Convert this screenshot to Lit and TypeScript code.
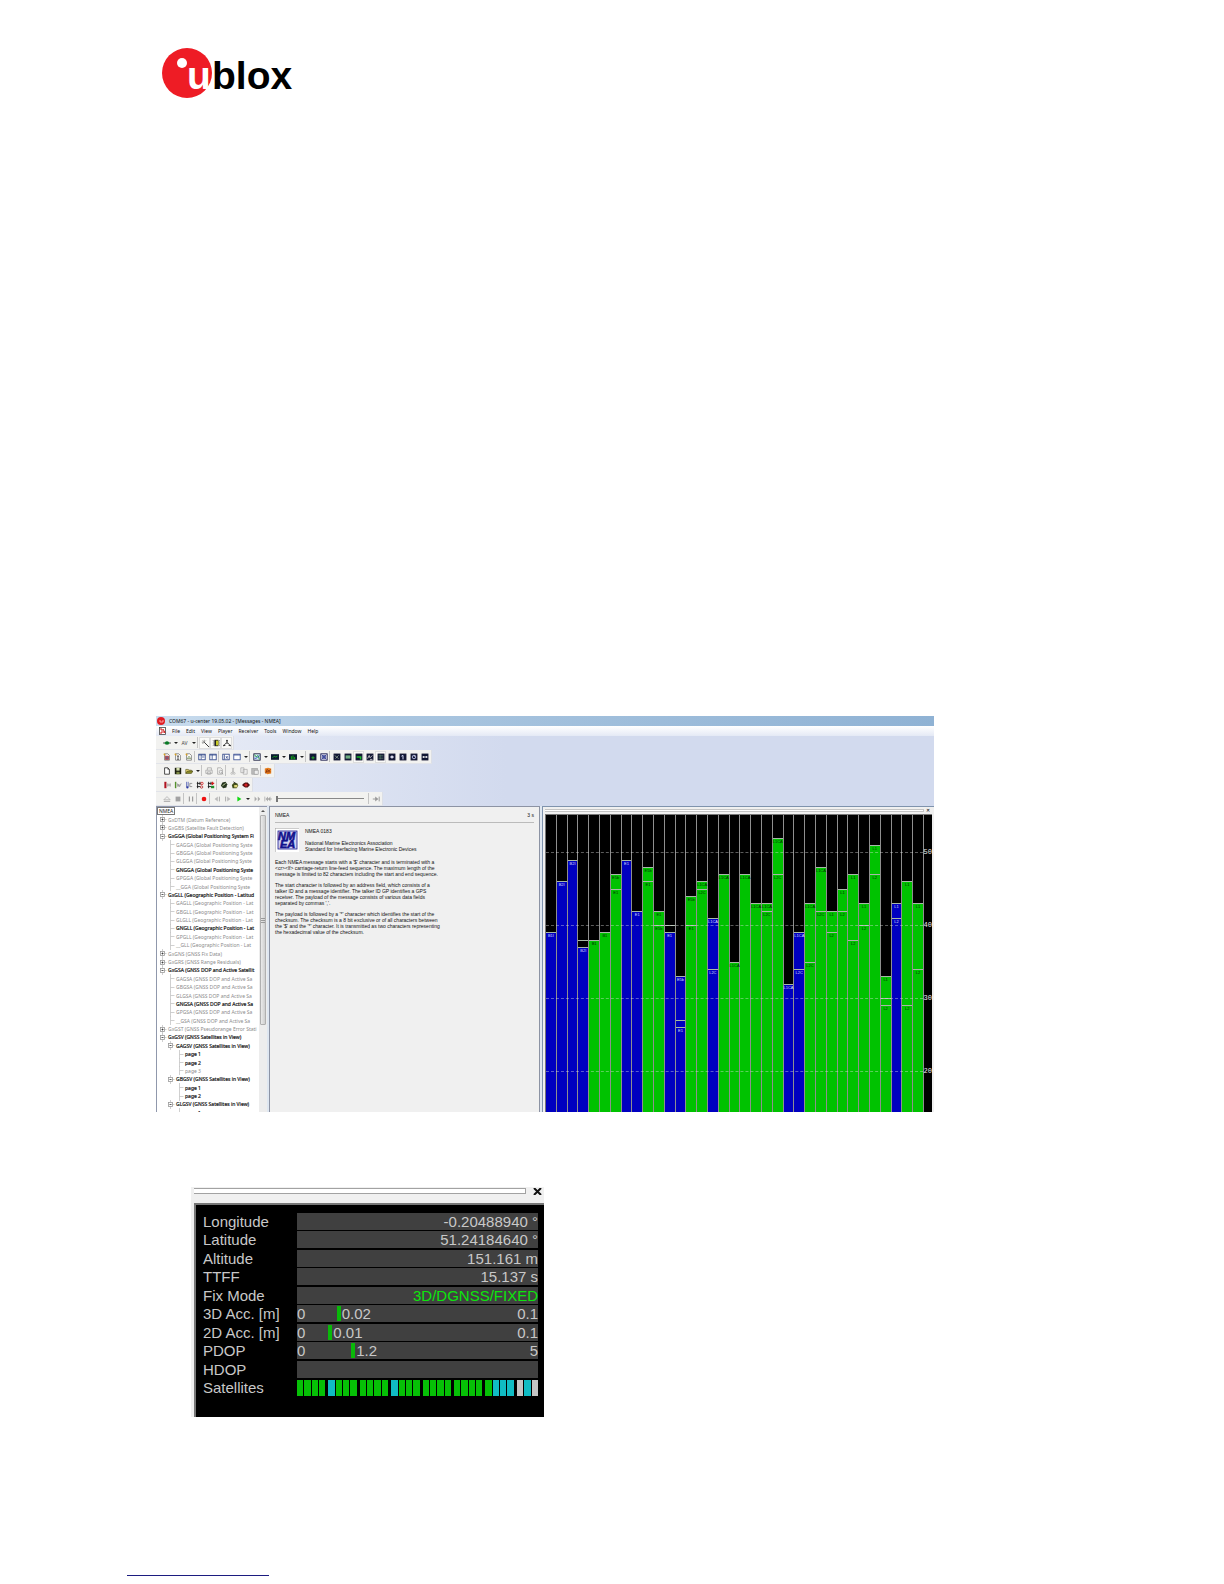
import { LitElement, html, svg, css, nothing } from "lit";
import { customElement } from "lit/decorators.js";
import { classMap } from "lit/directives/class-map.js";

/* ---------- icon set, each drawn on a 10 x 10 grid ---------- */
const sheet = svg`<path d="M2 1h4l2 2v6H2z" fill="#fff" stroke="#555" stroke-width=".8"/>`;
const darkBox = svg`<rect x="1" y="1" width="8" height="8" fill="#111633" stroke="#556" stroke-width=".6"/>`;
const icons: Record<string, unknown> = {
  connect: svg`<path d="M0 5h10" stroke="#333" stroke-width="1"/><rect x="2" y="3" width="6" height="4" rx="2" fill="#138a2c"/><path d="M5 3v4" stroke="#052"/>`,
  wand: svg`<path d="M4 4l6 6" stroke="#222" stroke-width="1.1"/><path d="M1 4h3M4 1v3M6 2l-1 1M2 6l1-1M2 2l1 1" stroke="#555" stroke-width=".8"/>`,
  bug: svg`<path d="M3 1h5v8H3z" fill="#222"/><path d="M1 2l2 1M1 5h2M1 8l2-1M8 3l2-1M8 5h2M8 7l2 1" stroke="#333" stroke-width=".8"/><path d="M5 2h3v6H5z" fill="#c7c927"/>`,
  antenna: svg`<path d="M5 2v3M5 5c-3 0-3 3-4 4M5 5c3 0 3 3 4 4M0 8h3M7 8h3" stroke="#222" stroke-width="1.1" fill="none"/><circle cx="5" cy="2" r="1.2" fill="#333"/>`,
  sheetR: svg`${sheet}<path d="M3 4h4v4H3z" stroke="#b03030" fill="#7a5a80" stroke-width=".9"/><path d="M1 1l2 2" stroke="#d8a020" stroke-width="1.6"/>`,
  sheetB: svg`${sheet}<path d="M5 3v5M4 4h2M4 8h2" stroke="#333"/><path d="M1 1l2 2" stroke="#d8a020" stroke-width="1.6"/>`,
  sheetG: svg`${sheet}<path d="M3 7l2-3 2 3z" fill="none" stroke="#557733" stroke-width=".8"/><path d="M1 1l2 2" stroke="#d8a020" stroke-width="1.6"/>`,
  split: svg`<rect x="1" y="1.500" width="8" height="7" fill="#fff" stroke="#223a80"/><path d="M1 2.500h8M4 2v6M5 5h3" stroke="#223a80" stroke-width=".9"/>`,
  pane: svg`<rect x="1" y="1.500" width="8" height="7" fill="#fff" stroke="#223a80"/><path d="M1 2.500h8M4 2v6" stroke="#223a80" stroke-width=".9"/>`,
  paneX: svg`<rect x="1" y="1.500" width="8" height="7" fill="#fff" stroke="#223a80"/><path d="M3 2v6M5 4l2 3M7 4l-2 3" stroke="#223a80" stroke-width=".9"/>`,
  win: svg`<rect x="1" y="1.500" width="8" height="7" fill="#fff" stroke="#334a90"/><path d="M1 2.500h8" stroke="#334a90"/>`,
  plot: svg`<rect x="1" y="1" width="8" height="8" fill="#d8ecf8" stroke="#113"/><path d="M2 2l2 3 2-2 2 5" stroke="#119a2c" fill="none"/><path d="M2 7l3-1 3-3" stroke="#1f3fb0" fill="none"/>`,
  wave: svg`<rect x="0" y="1.500" width="10" height="7" fill="#0a1a30"/><path d="M2 6l2-2 2 1 2-1" stroke="#22c322" fill="none"/>`,
  bars: svg`<rect x="0" y="1.500" width="10" height="7" fill="#101c30"/><path d="M3 8V4M5 8V3M7 8V5" stroke="#16b316" stroke-width="1.200"/>`,
  info: svg`${darkBox}<path d="M5 4v4M3 6h4" stroke="#2cc42c"/>`,
  sky: svg`<rect x="1" y="1" width="8" height="8" fill="#dde" stroke="#114"/><path d="M2 2l6 6M8 2L2 8" stroke="#22308a"/><circle cx="5" cy="5" r="2" fill="none" stroke="#22308a" stroke-width=".8"/>`,
  box1: svg`${darkBox}<path d="M2 3l5 4M7 3L3 7" stroke="#9ab09a" stroke-width=".9"/>`,
  box2: svg`${darkBox}<rect x="2" y="3" width="6" height="4" fill="#6dac80"/>`,
  box3: svg`${darkBox}<path d="M2 4h6v4H6V6H2z" fill="#17b52a"/>`,
  box4: svg`${darkBox}<path d="M2 7l2-4 1 3 3-3M5 8h3" stroke="#ddd" fill="none"/>`,
  box5: svg`${darkBox}<path d="M2 3h6M2 5h6M2 7h6M4 2v6" stroke="#5f866c" stroke-width=".7"/>`,
  box6: svg`${darkBox}<path d="M3 5h4M5 3v4" stroke="#eef" stroke-width="1.600"/>`,
  box7: svg`${darkBox}<path d="M3 4l2-1v5" stroke="#dfe4ff" fill="none" stroke-width="1.200"/>`,
  box8: svg`${darkBox}<circle cx="5" cy="5" r="2.200" fill="none" stroke="#cdd3ff"/><path d="M5 5l1-2" stroke="#fff" stroke-width=".8"/>`,
  box9: svg`${darkBox}<path d="M2 5h6M3 4v2M7 4v2" stroke="#fff" stroke-width="1.200"/>`,
  file: svg`<path d="M2 1h4l2 2v6H2z" fill="#fff" stroke="#222"/><path d="M6 1v2h2" fill="none" stroke="#222" stroke-width=".7"/>`,
  save: svg`<rect x="1" y="1" width="8" height="8" fill="#1c1f10"/><rect x="3" y="1" width="4" height="3.500" fill="#d6e0b0"/><rect x="3" y="6" width="4" height="3" fill="#7c8844"/>`,
  open: svg`<path d="M1 8V3h3l1 1h3v2" fill="#f3e27a" stroke="#4c4a10" stroke-width=".8"/><path d="M1 8l2-3h7L8 8z" fill="#90902a" stroke="#3c3a10" stroke-width=".7"/>`,
  print: svg`<path d="M3 4V1h5v3M1 4h8v4H1zM3 6h4v3H3z" fill="none" stroke="#aaa"/>`,
  preview: svg`<path d="M2 1h4l2 2v6H2z" fill="none" stroke="#aaa"/><circle cx="6" cy="6" r="2" fill="#eee" stroke="#999" stroke-width=".8"/><path d="M7 7l2 2" stroke="#999"/>`,
  cut: svg`<path d="M4 1l2 6M6 1L4 7" stroke="#aaa" stroke-width=".9"/><circle cx="3.500" cy="8" r="1.200" fill="none" stroke="#aaa" stroke-width=".8"/><circle cx="6.500" cy="8" r="1.200" fill="none" stroke="#aaa" stroke-width=".8"/>`,
  copy: svg`<path d="M1 1h4v6H1zM4 3h5v6H4z" fill="#eee" stroke="#aaa" stroke-width=".9"/>`,
  paste: svg`<rect x="1" y="2" width="7" height="7" fill="#bbb" stroke="#999" stroke-width=".8"/><rect x="4" y="4" width="5" height="5" fill="#eee" stroke="#999" stroke-width=".8"/>`,
  chip: svg`<path d="M1 2l4-1 4 1v6l-5 1-3-2z" fill="#e88020"/><path d="M2 8l2-5 2 2 2-2M3 6h5" stroke="#7c2808" fill="none"/>`,
  hot: svg`<path d="M3 1v8" stroke="#b01420" stroke-width="2.600"/><path d="M6 3v4M9 3v4M6 5h3" stroke="#666" stroke-width=".7"/>`,
  warm: svg`<path d="M2 1v8" stroke="#54902c" stroke-width="1.800"/><path d="M4 3l1 4 1-3 1 3 2-4" stroke="#666" fill="none" stroke-width=".7"/>`,
  cold: svg`<path d="M2 1v7M4 1v7" stroke="#2838a0" stroke-width=".8"/><circle cx="3" cy="8" r="1.300" fill="#2838a0"/><path d="M9 3H6v4h3" stroke="#666" fill="none" stroke-width=".8"/>`,
  gridR: svg`<path d="M2 1v8M5 1v4M1 3h5M1 7h4" stroke="#222" stroke-width="1.200"/><circle cx="7.500" cy="3" r="1.500" fill="none" stroke="#d02020"/><circle cx="7" cy="7.500" r="1.500" fill="none" stroke="#b02020"/>`,
  gridG: svg`<path d="M2 1v8M5 1v4M1 3h5M1 7h4" stroke="#222" stroke-width="1.200"/><path d="M7 1v4M5 3h4" stroke="#d02020" stroke-width="1.400"/><path d="M5 6h4v3H5z" fill="#1f8f2c"/>`,
  gearK: svg`<path d="M1 6l2-4 4-1 2 3-1 4-4 1z" fill="#26351e"/><path d="M3 6l4-3" stroke="#bfcf9f" stroke-width="1.200"/>`,
  gearY: svg`<path d="M1 5l3-3 4 1 1 3-2 3H2z" fill="#45511c"/><path d="M4 5h4v3H4z" fill="#dfd77a"/><path d="M3 1l3 2" stroke="#222"/>`,
  gearR: svg`<path d="M0 5l2-2 2-1 3 0 3 3-3 3-3 0-2-1z" fill="#521010"/><circle cx="5" cy="5" r="2" fill="#d42020"/>`,
  eject: svg`<path d="M5 2l4 4H1z" fill="#eee" stroke="#999" stroke-width=".7"/><path d="M1 8h8" stroke="#999"/>`,
  stop: svg`<rect x="2" y="2" width="6" height="6" fill="#a2a2a2"/>`,
  pause: svg`<path d="M3 2v6M7 2v6" stroke="#9c9c9c" stroke-width="1.500"/>`,
  rec: svg`<circle cx="5" cy="5" r="2.900" fill="#ee1111"/>`,
  back: svg`<path d="M6 2v6L2 5z" fill="#bbb"/><path d="M8 2v6" stroke="#999"/>`,
  step: svg`<path d="M4 2v6l4-3z" fill="#bbb"/><path d="M2 2v6" stroke="#999"/>`,
  play: svg`<path d="M3 2v6l5-3z" fill="#12d812"/>`,
  ff: svg`<path d="M2 2v6l3-3zM6 2v6l3-3z" fill="#aaa"/>`,
  rew: svg`<path d="M8 2v6L5 5zM5 2v6L2 5z" fill="#aaa"/><path d="M1 2v6M5 5h5" stroke="#999" stroke-width=".8"/>`,
  end: svg`<path d="M1 5h4" stroke="#888"/><path d="M4 2v6l4-3z" fill="#999"/><path d="M9 2v6" stroke="#888"/>`,
};

type Tool = string;
const toolRows: Tool[][] = [
  ["connect", "v", "AV", "v", "|", "wand*", "bug*", "antenna*"],
  ["sheetR", "sheetB", "sheetG", "|", "split", "pane", "|", "paneX", "win", "v", "|", "plot", "v", "wave", "v", "bars", "v", "|", "info", "sky", "|",
    "box1", "box2", "box3*", "box4", "box5*", "box6", "box7", "box8", "box9"],
  ["file", "save", "open", "v", "|", "print", "preview", "|", "cut", "copy", "paste", "|", "chip"],
  ["hot", "warm", "cold", "gridR", "gridG", "|", "gearK", "gearY", "gearR"],
  ["eject", "stop", "|", "pause", "|", "rec", "|", "back", "step", "play", "v", "ff", "rew", "slider", "|", "end"],
];

/* ---------- message tree: [level, text, state] ---------- */
type Row = [number, string, ("on" | "off")];
const family = (id: string, name: string): Row[] =>
  ["GA", "GB", "GL", "GN", "GP", "__"].map((t) => [2, `${t}${id} (${name}`, t === "GN" ? "on" : "off"] as Row);
const tree: Row[] = [
  [1, "GxDTM (Datum Reference)", "off"],
  [1, "GxGBS (Satellite Fault Detection)", "off"],
  [1, "GxGGA (Global Positioning System Fi", "on"],
  ...family("GGA", "Global Positioning Syste"),
  [1, "GxGLL (Geographic Position - Latitud", "on"],
  ...family("GLL", "Geographic Position - Lat"),
  [1, "GxGNS (GNSS Fix Data)", "off"],
  [1, "GxGRS (GNSS Range Residuals)", "off"],
  [1, "GxGSA (GNSS DOP and Active Satellit", "on"],
  ...family("GSA", "GNSS DOP and Active Sa"),
  [1, "GxGST (GNSS Pseudorange Error Stati", "off"],
  [1, "GxGSV (GNSS Satellites in View)", "on"],
  [2, "GAGSV (GNSS Satellites in View)", "on"],
  [3, "page 1", "on"], [3, "page 2", "on"], [3, "page 3", "off"],
  [2, "GBGSV (GNSS Satellites in View)", "on"],
  [3, "page 1", "on"], [3, "page 2", "on"],
  [2, "GLGSV (GNSS Satellites in View)", "on"],
  [3, "page 1", "on"],
];

/* ---------- signal levels in dBHz: colour, then level/label pairs ---------- */
type Signal = ["b" | "g", [number, string][], number?];
const signals: Signal[] = [
  ["b", [[39, "B1I"]]], ["b", [[46, "B2I"]]], ["b", [[49, "B2I"]]], ["b", [[37, "B2I"]], 38],
  ["g", [[38, "B1"]]], ["g", [[39, "B1"]]], ["g", [[47, "E5b"], [45, "E1"]]],
  ["b", [[49, "E1"]]], ["b", [[42, "E1"]]], ["g", [[48, "E5b"], [46, "E1"]]],
  ["g", [[42, "E1"], [40, "E5b"]]], ["b", [[39, "E1"]], 40], ["b", [[33, "E5b"], [27, ""], [26, "E1"]]],
  ["g", [[44, "E5b"], [40, "E1"]]], ["g", [[46, "L1CA"], [45, "L2C"]]], ["b", [[41, "L1CA"], [34, "L2C"]]],
  ["g", [[47, "L1CA"]]], ["g", [[35, "L1CA"]]], ["g", [[47, "L1CA"]]], ["g", [[43, "L1CA"]]],
  ["g", [[43, "L1CA"], [42, "L2C"]]], ["g", [[52, "L1CA"], [47, "L2C"]]], ["b", [[32, "L1CA"]]],
  ["b", [[39, "L1CA"], [34, "L2C"]]], ["g", [[43, "L1CA"], [35, "L2C"]]], ["g", [[48, "L1CA"], [42, "L2C"]]],
  ["g", [[42, "L1"], [39, "L2"]]], ["g", [[45, "L1"], [42, "L2"]]], ["g", [[47, "L1"], [38, "L2"]]],
  ["g", [[43, "L1"], [40, "L2"]]], ["g", [[51, "L1"], [47, "L2"]]], ["g", [[33, "L1"], [30, ""], [29, "L2"]]],
  ["b", [[43, "L1"], [41, "L2"]]], ["g", [[46, "L1"], [29, "L2"]]], ["g", [[43, "L1"], [34, "L2"]]],
];
const TOP = 55.1;
const SPAN = 40.7;
const down = (level: number) => `top:${((TOP - level) / SPAN) * 100}%`;

@customElement("brand-logo")
export class BrandLogo extends LitElement {
  static styles = css`
    :host { display: block; }
    .mark { display: block; }
    .word { font: 700 39px "Liberation Sans", sans-serif; }
  `;
  render() {
    return html`<svg class="mark" width="136" height="52" viewBox="0 0 136 52" role="img" aria-label="ublox">
      <circle cx="26" cy="26" r="25" fill="#ee1c25" />
      <circle cx="21" cy="16" r="5" fill="#fff" />
      <text class="word" x="26" y="42" fill="#fff">u</text>
      <text class="word" x="51" y="42" fill="#000">blox</text>
    </svg>`;
  }
}

@customElement("tool-bars")
export class ToolBars extends LitElement {
  static styles = css`
    :host { display: block; background: linear-gradient(90deg, #e9edf7 0, #d2daee 45%, #d2daee 100%); }
    .bar { display: flex; width: max-content; height: 14px; box-sizing: border-box; padding: 0 1px 0 5px; align-items: center;
      background: #f2f2f0; border-bottom: 1px solid #e2e4ea; border-right: 1px solid #dcdfe6; }
    .btn { width: 11px; height: 12px; padding: 1px; border: 0; background: none; display: grid; place-items: center;
      font: 5px "Noto Sans", sans-serif; color: #444; box-sizing: border-box; flex: none; }
    .held { background: #fafaf8; box-shadow: inset 0 0 0 1px #ddd; }
    .drop { width: 7px; padding: 0; }
    .sep { width: 1px; height: 11px; background: #c4c4c4; margin-right: 1px; }
    .seek { width: 88px; height: 10px; margin: 0 4px 0 3px; appearance: none; flex: none;
      background: linear-gradient(#888, #888) center / 100% 1px no-repeat; }
    .seek::-webkit-slider-thumb { appearance: none; width: 2px; height: 6px; background: #777; }
  `;
  tool(t: Tool) {
    if (t === "|") return html`<span class="sep"></span>`;
    if (t === "slider") return html`<input class="seek" type="range" value="0" aria-label="Playback position" />`;
    if (t === "v") return html`<button class="btn drop" aria-label="More"><svg width="4" height="2" viewBox="0 0 4 2"><path d="M0 0h4L2 2z" fill="#222"/></svg></button>`;
    if (t === "AV") return html`<button class="btn">AV</button>`;
    const name = t.replace("*", "");
    return html`<button class=${classMap({ btn: true, held: t.endsWith("*") })} aria-label=${name}>
      <svg width="8" height="8" viewBox="0 0 10 10">${icons[name]}</svg></button>`;
  }
  render() {
    return toolRows.map((row) => html`<div class="bar" role="toolbar">${row.map((t) => this.tool(t))}</div>`);
  }
}

@customElement("message-tree")
export class MessageTree extends LitElement {
  static styles = css`
    :host { display: flex; min-width: 0; overflow: hidden; background: #fff; border: 1px solid #9098ac; border-width: 1px 0 0 1px; box-sizing: border-box; }
    .list { flex: 1; min-width: 0; height: 310px; display: grid; grid-auto-rows: 1fr; margin: 0; padding: 0; list-style: none;
      font: 5px/8px "Noto Sans", sans-serif; color: #1c1c1c; overflow: hidden; }
    .row { display: flex; align-items: center; white-space: nowrap; min-height: 0; padding-left: 3px; -webkit-text-stroke: 0.2px; }
    .off { color: #8c8c8c; -webkit-text-stroke: 0; }
    .root span { border: 1px solid #777; margin-left: -3px; line-height: 6px; padding: 0 1px; -webkit-text-stroke: 0; }
    .l2 { padding-left: 11px; }
    .l3 { padding-left: 20px; }
    .box { width: 8px; flex: none; }
    .track { width: 8px; flex: none; background: #ededed; display: flex; flex-direction: column; align-items: center; }
    .arrow, .thumb { box-sizing: border-box; display: grid; place-items: center; }
    .arrow { height: 8px; }
    .thumb { width: 6px; height: 210px; background: linear-gradient(90deg, #eaeaea, #cfcfcf); border: 1px solid #b0b0b0; border-radius: 1px; }
  `;
  box(level: number, text: string, open: boolean) {
    const parent = level === 1 || (level === 2 && text.includes("GSV"));
    return html`<svg class="box" width="8" height="9" viewBox="0 0 8 9">
      <path d="M2.500 0v9M2.500 4.500h4" stroke="#c4c4c4" stroke-width=".8" fill="none" />
      ${parent ? svg`<rect x=".5" y="2.500" width="4" height="4" fill="#fff" stroke="#999" stroke-width=".8" /><path d="M1.500 4.500h2" stroke="#333" stroke-width=".8" />
      ${open ? nothing : svg`<path d="M2.500 3.500v2" stroke="#333" stroke-width=".8" />`}` : nothing}</svg>`;
  }
  render() {
    return html`<ul class="list">
        <li class="row root"><span>NMEA</span></li>
        ${tree.map(([level, text, state]) => html`<li class=${`row l${level} ${state}`}>${this.box(level, text, state === "on")}<span>${text}</span></li>`)}
      </ul>
      <div class="track">
        <span class="arrow"><svg width="4" height="2" viewBox="0 0 4 2"><path d="M0 2h4L2 0z" fill="#555"/></svg></span>
        <div class="thumb"><svg width="4" height="5" viewBox="0 0 4 5"><path d="M0 .5h4M0 2.500h4M0 4.500h4" stroke="#888" stroke-width=".8"/></svg></div>
      </div>`;
  }
}

@customElement("message-info")
export class MessageInfo extends LitElement {
  static styles = css`
    :host { display: block; background: #f0f0f0; border: 1px solid #8c93a4; border-width: 1px 1px 0; box-sizing: border-box; padding: 5px 5px 0;
      font: 5px/6px "Liberation Sans", sans-serif; color: #111; }
    .head { display: flex; justify-content: space-between; padding-bottom: 4px; border-bottom: 1px solid #bbb; }
    .intro { display: flex; gap: 6px; margin-top: 5px; }
    .intro p { margin: 0 0 6px; }
    .intro p:last-child { margin: 0; }
    .text { margin: 5px 0 0; white-space: pre-line; }
    .badge { display: block; flex: none; }
    .body { padding-top: 2px; }
    .mark { font: italic 900 11px "Liberation Sans", sans-serif; }
  `;
  render() {
    return html`<div class="head"><span>NMEA</span><span>3 s</span></div>
      <div class="intro">
        <svg class="badge" width="24" height="24" viewBox="0 0 24 24" role="img" aria-label="NMEA">
          <rect width="24" height="24" fill="#fff" /><path d="M0 24V0h24" fill="none" stroke="#999" />
          <rect x="3" y="3" width="19" height="18" fill="#d0d0f0" stroke="#1a1a90" stroke-width=".8" />
          <text class="mark" x="3" y="12" fill="#11118c" stroke="#11118c" stroke-width=".6">NM</text><text class="mark" x="5" y="20" fill="#11118c" stroke="#11118c" stroke-width=".6">EA</text>
        </svg>
        <div><p>NMEA 0183</p><p>National Marine Electronics Association<br />Standard for Interfacing Marine Electronic Devices</p></div>
      </div>
      <div class="body">
      <p class="text">Each NMEA message starts with a '$' character and is terminated with a
&lt;cr>&lt;lf> carriage-return line-feed sequence. The maximum length of the
message is limited to 82 characters including the start and end sequence.</p>
      <p class="text">The start character is followed by an address field, which consists of a
talker ID and a message identifier. The talker ID GP identifies a GPS
receiver. The payload of the message consists of various data fields
separated by commas ','.</p>
      <p class="text">The payload is followed by a '*' character which identifies the start of the
checksum. The checksum is a 8 bit exclusive or of all characters between
the '$' and the '*' character. It is transmitted as two characters representing
the hexadecimal value of the checksum.</p>
      </div>`;
  }
}

@customElement("signal-chart")
export class SignalChart extends LitElement {
  static styles = css`
    :host { display: flex; flex-direction: column; background: #f0f0f0; border: 1px solid #7f93ad; border-width: 1px 0 0 1px; box-sizing: border-box; padding: 0 2px; }
    .grip { display: flex; align-items: center; height: 7px; }
    .lines { flex: 1; height: 3px; border: 1px solid #c4c4c4; border-left: 0; box-sizing: border-box; background: #fff; }
    .close { width: 8px; height: 7px; padding: 0; border: 0; background: none; font: 700 5px/7px "DejaVu Sans", sans-serif; }
    .plot { flex: 1; position: relative; display: flex; background: #000; border-top: 1px solid #777; border-left: 1px solid #777; padding-right: 8px; }
    .col { flex: 1; position: relative; border-right: 1px solid #8f8f8f; min-width: 0; }
    .fill, .mark { position: absolute; left: 0; right: 0; }
    .fill { bottom: 0; }
    .b .fill { background: #0000c0; }
    .g .fill { background: #00c200; }
    .mark { border-top: 1px solid #a8b8a8; font: 4px/5px "Liberation Sans", sans-serif; text-align: center; color: #022c02; }
    .b .mark { color: #d8dcff; }
    .level { position: absolute; left: 0; right: 9px; border-top: 1px dashed rgba(230, 230, 230, 0.4); }
    .tick { position: absolute; right: 0; margin-top: -4px; font: 7px/8px "Liberation Mono", monospace; color: #eee; }
  `;
  render() {
    return html`<div class="grip"><span class="lines"></span><button class="close" aria-label="Close">✕</button></div>
      <div class="plot">
        ${signals.map(([c, marks, ghost]) => html`<div class=${`col ${c}`}>
          <div class="fill" style=${down(marks[0][0])}></div>
          ${ghost ? html`<div class="mark" style=${down(ghost)}></div>` : nothing}
          ${marks.map(([v, label]) => html`<div class="mark" style=${down(v)}>${label}</div>`)}
        </div>`)}
        ${[50, 40, 30, 20].map((v) => html`<div class="level" style=${down(v)}></div><span class="tick" style=${down(v)}>${v}</span>`)}
      </div>`;
  }
}

const sats = "gggg cggg gggg cggg gggg gggg gccc wcw".split(" ");

@customElement("fix-panel")
export class FixPanel extends LitElement {
  static styles = css`
    :host { display: block; background: #f0f0f0; padding: 0 0 0 3px; font: 15px/17px "Liberation Sans", sans-serif; color: #c8c8c8; }
    .grip { display: flex; align-items: center; height: 16px; box-sizing: border-box; padding-bottom: 8px; }
    .lines { flex: 1; height: 6px; border: 1px solid #a2a2a2; border-left: 0; box-sizing: border-box; background: #fff; }
    .close { width: 18px; height: 8px; padding: 0 0 0 7px; border: 0; background: none; }
    .close svg { display: block; }
    .screen { background: #000; border: 2px solid #777; border-width: 2px 0 0 2px; padding: 7px 6px 20px 7px; }
    .table { width: 100%; height: 185px; border-collapse: collapse; }
    .name, .cell { padding: 0; height: 18px; box-sizing: border-box; }
    .name { width: 94px; text-align: left; font-weight: 400; white-space: nowrap; }
    .field { position: relative; height: 17px; background: #404040; display: flex; justify-content: flex-end; white-space: pre; }
    .fix { color: #0ce60c; }
    .range { justify-content: space-between; }
    .needle { position: absolute; height: 15px; top: 1px; border-left: 4px solid #09b909; padding-left: 1px; line-height: 15px; }
    .sats { display: flex; height: 16px; gap: 3px; }
    .group { display: flex; gap: 1px; flex: 4; }
    .last { flex: 3; }
    .sat { flex: 1; background: #06c006; }
    .c { background: #10bcc4; }
    .w { background: #c4c4c4; }
  `;
  render() {
    const plain: [string, string][] = [
      ["Longitude", "-0.20488940 °"], ["Latitude", "51.24184640 °"], ["Altitude", "151.161 m"], ["TTFF", "15.137 s"], ["Fix Mode", "3D/DGNSS/FIXED"],
    ];
    const ranged: [string, string, string, number][] = [
      ["3D Acc. [m]", "0.02", "0.1", 16.500], ["2D Acc. [m]", "0.01", "0.1", 13], ["PDOP", "1.2", "5", 22.500],
    ];
    return html`<div class="grip"><span class="lines"></span><button class="close" aria-label="Close"><svg width="9" height="7" viewBox="0 0 9 7"><path d="M1 0l7 7M8 0L1 7" stroke="#111" stroke-width="2"/></svg></button></div>
      <div class="screen"><table class="table">
        ${plain.map(([n, v], i) => html`<tr><th class="name" scope="row">${n}</th><td class="cell"><div class=${classMap({ field: true, fix: i === 4 })}>${v}</div></td></tr>`)}
        ${ranged.map(([n, v, max, at]) => html`<tr><th class="name" scope="row">${n}</th><td class="cell"><div class="field range"><span>0</span><span class="needle" style=${`left:${at}%`}>${v}</span><span>${max}</span></div></td></tr>`)}
        <tr><th class="name" scope="row">HDOP</th><td class="cell"><div class="field"></div></td></tr>
        <tr><th class="name" scope="row">Satellites</th><td class="cell"><div class="sats">
          ${sats.map((g) => html`<span class=${classMap({ group: true, last: g.length === 3 })}>${[...g].map((s) => html`<i class=${`sat ${s}`}></i>`)}</span>`)}
        </div></td></tr>
      </table></div>`;
  }
}

@customElement("app-root")
export class AppRoot extends LitElement {
  static styles = css`
    :host { display: block; background: #fff; padding-bottom: 8px; }
    .lane { display: grid; grid-template-columns: 156fr 778fr 290fr; }
    .logo { padding: 47px 0 0 5px; grid-column: 2 / 4; }
    .window { grid-column: 2; margin-top: 617px; display: flex; flex-direction: column; min-width: 0; font: 5px/10px "Noto Sans", sans-serif; color: #111; }
    .title { display: flex; align-items: center; gap: 4px; height: 10px; padding-left: 1px; background: linear-gradient(90deg, #c9dcee 0, #aac6e0 30%, #8fb2d4 100%); }
    .menu { display: flex; align-items: center; height: 10px; padding-left: 3px; background: linear-gradient(#fff, #e4e9f5); gap: 6px; }
    .item { padding: 0; border: 0; background: none; font: inherit; color: inherit; }
    .icon { display: block; }
    .work { display: grid; grid-template-columns: 111px 2px 271px 2px 1fr; height: 306px; overflow: hidden; background: #dfe7f1; }
    .tree { grid-column: 1; }
    .info { grid-column: 3; }
    .chart { grid-column: 5; }
    .small { display: grid; grid-template-columns: 191fr 353fr 680fr; margin-top: 75px; }
    .fix { grid-column: 2; min-width: 0; }
    .foot { display: grid; grid-template-columns: 127fr 142fr 955fr; margin-top: 158px; }
    .rule { grid-column: 2; height: 1px; border: 0; margin: 0; background: #1c1c80; }
  `;
  render() {
    return html`
      <header class="lane"><div class="logo"><brand-logo></brand-logo></div></header>
      <main>
        <div class="lane"><section class="window">
          <div class="title"><svg class="icon" width="8" height="8" viewBox="0 0 8 8"><circle cx="4" cy="4" r="4" fill="#e01c24" /><path d="M3 3v2h3V3" fill="none" stroke="#fbb" stroke-width=".8"/></svg><span>COM67 - u-center 19.05.02 - [Messages - NMEA]</span></div>
          <nav class="menu">
            <svg class="icon" width="7" height="8" viewBox="0 0 7 8"><rect x=".5" y=".5" width="6" height="7" fill="#fff" stroke="#444" stroke-width=".8"/><path d="M1 2h2v4H1M4 2l2 4M4 5h2" stroke="#d01818" fill="none"/></svg>
            ${["File", "Edit", "View", "Player", "Receiver", "Tools", "Window", "Help"].map((m) => html`<button class="item">${m}</button>`)}
          </nav>
          <tool-bars></tool-bars>
          <div class="work"><message-tree class="tree"></message-tree><message-info class="info"></message-info><signal-chart class="chart"></signal-chart></div>
        </section></div>
        <div class="small"><fix-panel class="fix"></fix-panel></div>
      </main>
      <footer class="foot"><hr class="rule" /></footer>`;
  }
}
